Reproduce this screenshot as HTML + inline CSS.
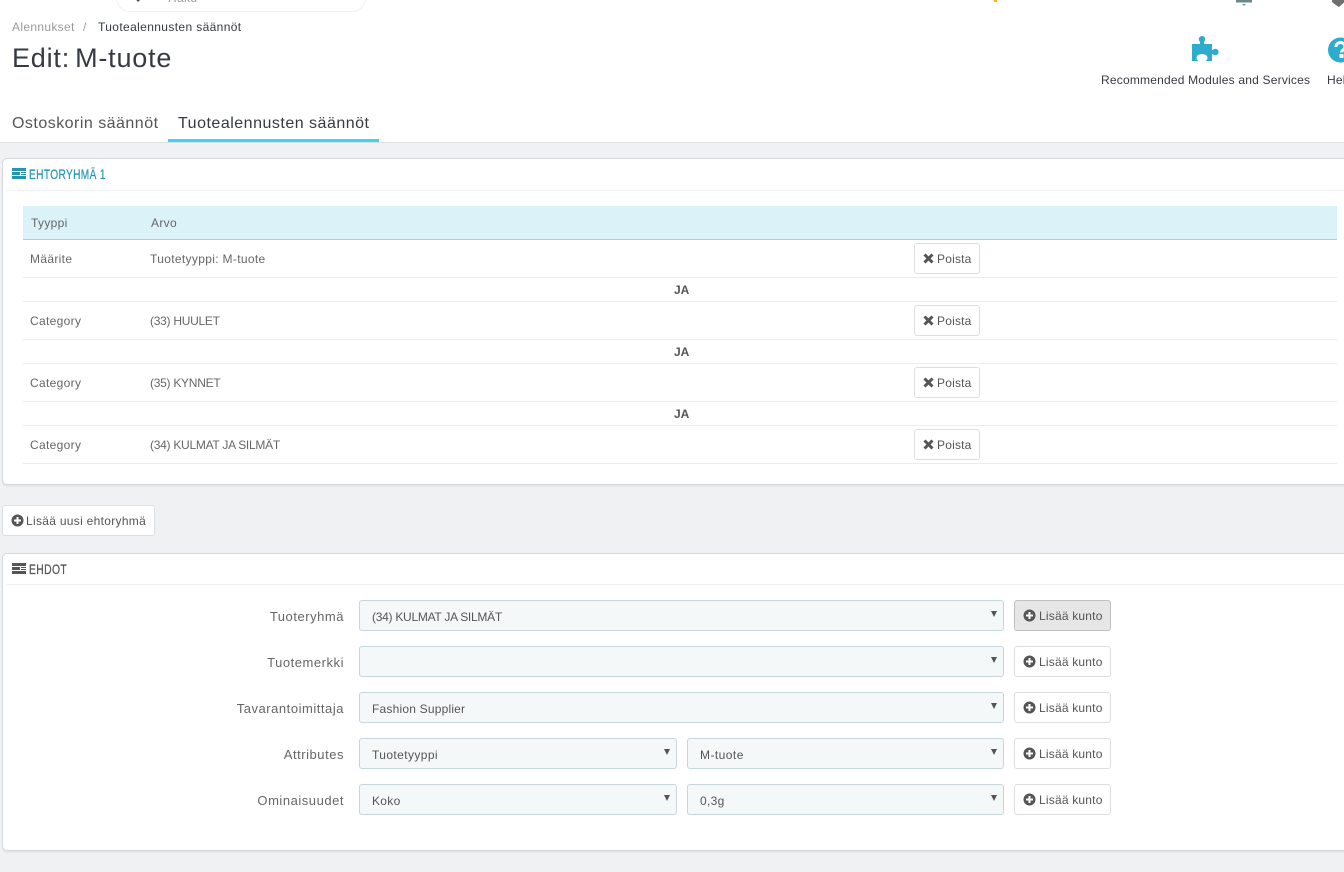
<!DOCTYPE html>
<html lang="fi"><head><meta charset="utf-8"><title>Edit: M-tuote</title>
<style>
html,body{margin:0;padding:0}
body{width:1344px;height:872px;position:relative;overflow:hidden;background:#eff1f2;font-family:"Liberation Sans",sans-serif;font-size:12px;color:#6c868e}
.a{position:absolute;box-sizing:border-box}
.t{position:absolute;white-space:nowrap;line-height:20px;letter-spacing:.33px;color:#666}
.c{letter-spacing:-.27px}
.r{text-align:right;font-size:13px;letter-spacing:.53px}
.line{position:absolute;left:23px;width:1314px;height:1px;background:#eaedef}
.panel{position:absolute;left:2px;width:1400px;background:#fff;border:1px solid #d3d8db;border-radius:5px;box-shadow:0 2px 0 rgba(0,0,0,.04);box-sizing:border-box}
.btn{position:absolute;box-sizing:border-box;background:#fff;border:1px solid #dcdfe2;border-radius:3px;height:31px;color:#555;line-height:31px;white-space:nowrap;letter-spacing:.2px}
.btn svg{position:absolute;top:8px}
.sel{position:absolute;box-sizing:border-box;height:31px;background:#f5f8f9;border:1px solid #c7d6db;border-radius:3px;line-height:33px;padding-left:12px;color:#555;letter-spacing:.3px;white-space:nowrap}
.sel:after{content:"";position:absolute;right:6px;top:10px;border-left:3px solid transparent;border-right:3px solid transparent;border-top:6px solid #555}
.hd{position:absolute;font-size:14px;line-height:18px;transform:scaleX(.74);transform-origin:0 50%;white-space:nowrap;letter-spacing:.5px;-webkit-text-stroke:.25px currentColor}
</style></head><body>
<div class="a" style="left:0;top:0;width:1344px;height:143px;background:#fff;border-bottom:1px solid #dcdfe2"></div>
<div class="a" style="left:116px;top:-30px;width:250px;height:42px;border:1px solid #eef0f1;border-radius:14px;background:#fff"></div>
<svg class="a" style="left:127px;top:-7px" width="14" height="12" viewBox="0 0 14 12"><circle cx="5" cy="1" r="4.500" fill="none" stroke="#444" stroke-width="2"/><path d="M8 4l4 4" stroke="#444" stroke-width="2.400"/></svg>
<div class="t" style="left:168px;top:-12px;color:#999">Hakü</div>
<div class="a" style="left:994px;top:0;width:3px;height:2px;background:#f7b32b"></div>
<svg class="a" style="left:1235px;top:0" width="18" height="6" viewBox="0 0 18 6"><path d="M1 0h16v2.500h-16zM7 4h4l-2 1.800z" fill="#6c868e"/></svg>
<svg class="a" style="left:1332px;top:0" width="12" height="8" viewBox="0 0 12 8"><path d="M0 0h12v2.500l-5 4.500-4-2.500-3-2.500z" fill="#6f6f6f"/></svg>

<div class="t" style="left:12px;top:17px;color:#999">Alennukset</div>
<div class="t" style="left:83px;top:17px;color:#999">/</div>
<div class="t" style="left:98px;top:17px;color:#363a41;letter-spacing:.37px">Tuotealennusten säännöt</div>
<div class="t" style="left:12px;top:43px;line-height:30px;font-size:27px;color:#363a41;letter-spacing:.8px;word-spacing:-3.250px">Edit: M-tuote</div>

<svg class="a" style="left:1192px;top:36px" width="27" height="25" viewBox="0 0 27 25"><path fill="#2eacce" d="M0 8h8V5.500h4V8h8v6h2.500v4H20v7h-6.500c1.500-1 2-2 2-3.500a5.500 3.500 0 0 0-11 0c0 1.500.5 2.500 2 3.500H0z"/><circle cx="10" cy="3.200" r="3.200" fill="#2eacce"/><circle cx="23.400" cy="16" r="3.200" fill="#2eacce"/></svg>
<div class="t" style="left:1101px;top:70px;color:#363a41;letter-spacing:.2px">Recommended Modules and Services</div>
<svg class="a" style="left:1328px;top:37px" width="16" height="26" viewBox="0 0 16 26"><circle cx="12.500" cy="13" r="12.500" fill="#2eacce"/><path d="M8 10c0-6 9-6 9 0 0 3-3.500 3-3.500 5.500" fill="none" stroke="#fff" stroke-width="3"/><rect x="11.500" y="17" width="4" height="4" fill="#fff"/></svg>
<div class="t" style="left:1327px;top:70px;color:#363a41;letter-spacing:.2px">Help</div>

<div class="t" style="left:12px;top:112px;font-size:16px;line-height:24px;color:#555;letter-spacing:.48px">Ostoskorin säännöt</div>
<div class="t" style="left:178px;top:112px;font-size:16px;line-height:24px;color:#363a41;letter-spacing:.5px">Tuotealennusten säännöt</div>
<div class="a" style="left:168px;top:139px;width:211px;height:3px;background:#3ed2f0"></div>

<!-- Panel 1 -->
<div class="panel" style="top:158px;height:327px"></div>
<div class="a" style="left:7px;top:190px;width:1337px;height:1px;background:#eef0f1"></div>
<svg class="a" style="left:12px;top:168px" width="14" height="11" viewBox="0 0 14 11"><path fill="#2596b0" d="M0 0h14v3H0zM0 4h8v3H0zM9 4h5v1H9zM0 8h14v3H0z"/><rect x="9" y="6" width="5" height="1" fill="#2596b0"/></svg>
<div class="hd" style="left:29px;top:165px;color:#2596b0;transform:scaleX(.725)">EHTORYHMÄ 1</div>

<div class="a" style="left:23px;top:206px;width:1314px;height:34px;background:#dbf2f9;border-bottom:1px solid #a4d0e0"></div>
<div class="t" style="left:31px;top:213px;color:#666">Tyyppi</div>
<div class="t" style="left:151px;top:213px;color:#666">Arvo</div>

<div class="t" style="left:30px;top:249px">Määrite</div>
<div class="t" style="left:150px;top:249px">Tuotetyyppi: M-tuote</div>
<div class="line" style="top:277px"></div>
<div class="t" style="left:674px;top:280px;font-weight:bold;color:#555;letter-spacing:0">JA</div>
<div class="line" style="top:301px"></div>
<div class="t" style="left:30px;top:311px">Category</div>
<div class="t c" style="left:150px;top:311px">(33) HUULET</div>
<div class="line" style="top:339px"></div>
<div class="t" style="left:674px;top:342px;font-weight:bold;color:#555;letter-spacing:0">JA</div>
<div class="line" style="top:363px"></div>
<div class="t" style="left:30px;top:373px">Category</div>
<div class="t c" style="left:150px;top:373px">(35) KYNNET</div>
<div class="line" style="top:401px"></div>
<div class="t" style="left:674px;top:404px;font-weight:bold;color:#555;letter-spacing:0">JA</div>
<div class="line" style="top:425px"></div>
<div class="t" style="left:30px;top:435px">Category</div>
<div class="t c" style="left:150px;top:435px">(34) KULMAT JA SILMÄT</div>
<div class="line" style="top:463px"></div>

<div class="btn" style="left:914px;top:243px;width:66px;padding-left:22px">Poista<svg style="left:8px;top:9px" width="11" height="11" viewBox="0 0 11 11"><path d="M1.500 1.500l8 8M9.500 1.500l-8 8" stroke="#555" stroke-width="3"/></svg></div>
<div class="btn" style="left:914px;top:305px;width:66px;padding-left:22px">Poista<svg style="left:8px;top:9px" width="11" height="11" viewBox="0 0 11 11"><path d="M1.500 1.500l8 8M9.500 1.500l-8 8" stroke="#555" stroke-width="3"/></svg></div>
<div class="btn" style="left:914px;top:367px;width:66px;padding-left:22px">Poista<svg style="left:8px;top:9px" width="11" height="11" viewBox="0 0 11 11"><path d="M1.500 1.500l8 8M9.500 1.500l-8 8" stroke="#555" stroke-width="3"/></svg></div>
<div class="btn" style="left:914px;top:429px;width:66px;padding-left:22px">Poista<svg style="left:8px;top:9px" width="11" height="11" viewBox="0 0 11 11"><path d="M1.500 1.500l8 8M9.500 1.500l-8 8" stroke="#555" stroke-width="3"/></svg></div>

<div class="btn" style="left:2px;top:505px;width:153px;padding-left:23px;letter-spacing:.3px">Lisää uusi ehtoryhmä<svg style="left:8px;top:8px" width="13" height="13" viewBox="0 0 13 13"><circle cx="6.500" cy="6.500" r="6" fill="#555"/><path d="M6.500 3v7M3 6.500h7" stroke="#fff" stroke-width="2"/></svg></div>

<!-- Panel 2 -->
<div class="panel" style="top:553px;height:298px"></div>
<div class="a" style="left:7px;top:584px;width:1337px;height:1px;background:#eef0f1"></div>
<svg class="a" style="left:12px;top:563px" width="14" height="11" viewBox="0 0 14 11"><path fill="#555" d="M0 0h14v3H0zM0 4h8v3H0zM9 4h5v1H9zM0 8h14v3H0z"/><rect x="9" y="6" width="5" height="1" fill="#555"/></svg>
<div class="hd" style="left:29px;top:560px;color:#555">EHDOT</div>

<div class="t r" style="left:200px;width:144px;top:607px">Tuoteryhmä</div>
<div class="t r" style="left:200px;width:144px;top:653px">Tuotemerkki</div>
<div class="t r" style="left:200px;width:144px;top:699px">Tavarantoimittaja</div>
<div class="t r" style="left:200px;width:144px;top:745px">Attributes</div>
<div class="t r" style="left:200px;width:144px;top:791px">Ominaisuudet</div>

<div class="sel" style="left:359px;top:600px;width:645px;letter-spacing:-.27px">(34) KULMAT JA SILMÄT</div>
<div class="sel" style="left:359px;top:646px;width:645px"></div>
<div class="sel" style="left:359px;top:692px;width:645px;letter-spacing:.2px">Fashion Supplier</div>
<div class="sel" style="left:359px;top:738px;width:318px;letter-spacing:.4px">Tuotetyyppi</div>
<div class="sel" style="left:687px;top:738px;width:317px;letter-spacing:.45px">M-tuote</div>
<div class="sel" style="left:359px;top:784px;width:318px">Koko</div>
<div class="sel" style="left:687px;top:784px;width:317px">0,3g</div>

<div class="btn" style="left:1014px;top:600px;width:97px;padding-left:24px;background:#e6e6e6;border-color:#bfbfbf">Lisää kunto<svg style="left:8px;top:8px" width="13" height="13" viewBox="0 0 13 13"><circle cx="6.500" cy="6.500" r="6" fill="#555"/><path d="M6.500 3v7M3 6.500h7" stroke="#fff" stroke-width="2"/></svg></div>
<div class="btn" style="left:1014px;top:646px;width:97px;padding-left:24px">Lisää kunto<svg style="left:8px;top:8px" width="13" height="13" viewBox="0 0 13 13"><circle cx="6.500" cy="6.500" r="6" fill="#555"/><path d="M6.500 3v7M3 6.500h7" stroke="#fff" stroke-width="2"/></svg></div>
<div class="btn" style="left:1014px;top:692px;width:97px;padding-left:24px">Lisää kunto<svg style="left:8px;top:8px" width="13" height="13" viewBox="0 0 13 13"><circle cx="6.500" cy="6.500" r="6" fill="#555"/><path d="M6.500 3v7M3 6.500h7" stroke="#fff" stroke-width="2"/></svg></div>
<div class="btn" style="left:1014px;top:738px;width:97px;padding-left:24px">Lisää kunto<svg style="left:8px;top:8px" width="13" height="13" viewBox="0 0 13 13"><circle cx="6.500" cy="6.500" r="6" fill="#555"/><path d="M6.500 3v7M3 6.500h7" stroke="#fff" stroke-width="2"/></svg></div>
<div class="btn" style="left:1014px;top:784px;width:97px;padding-left:24px">Lisää kunto<svg style="left:8px;top:8px" width="13" height="13" viewBox="0 0 13 13"><circle cx="6.500" cy="6.500" r="6" fill="#555"/><path d="M6.500 3v7M3 6.500h7" stroke="#fff" stroke-width="2"/></svg></div>
</body></html>
